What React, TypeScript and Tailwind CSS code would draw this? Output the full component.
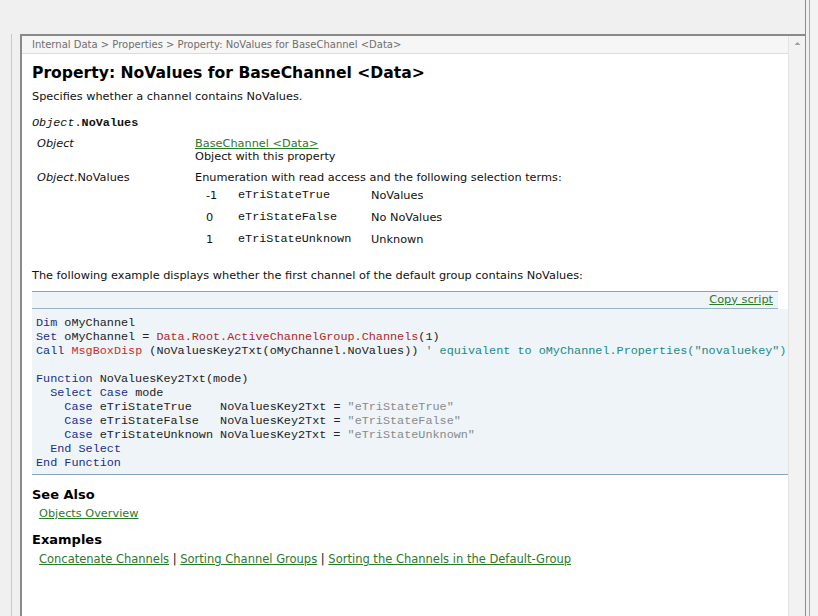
import React from 'react';

const sans = { fontFamily: '"DejaVu Sans", Verdana, sans-serif' };
const mono = { fontFamily: '"Liberation Mono", "Courier New", monospace' };

const ENUMS = [
  ['-1', 'eTriStateTrue', 'NoValues'],
  ['0', 'eTriStateFalse', 'No NoValues'],
  ['1', 'eTriStateUnknown', 'Unknown'],
];

function Kw({ children }: { children: React.ReactNode }) {
  return <span className="text-[#1c2f8a]">{children}</span>;
}
function Str({ children }: { children: React.ReactNode }) {
  return <span className="text-[#8a8a8a]">{children}</span>;
}

function CodeBlock() {
  return (
    <div className="mt-[7px]">
      <div className="flex h-[18px] items-center justify-end border-t border-b border-t-[#86a5b9] border-b-[#9bb3c3] border-b-dotted bg-[#eef4f8] pr-[5px]">
        <a className="text-[11.3px] text-[#2b7a2b] underline" style={sans}>Copy script</a>
      </div>
      <pre
        className="w-[770px] overflow-hidden whitespace-pre border-b border-[#86a5b9] bg-[#eef4f8] pt-[7px] pb-[4px] pl-[4px] text-[11.8px] leading-[14px] text-[#222]"
        style={mono}
      >
        <Kw>Dim</Kw> oMyChannel{'\n'}
        <Kw>Set</Kw> oMyChannel = <span className="text-[#b0282a]">Data.Root.ActiveChannelGroup.Channels</span>(1){'\n'}
        <Kw>Call</Kw> <span className="text-[#c8302e]">MsgBoxDisp</span> (NoValuesKey2Txt(oMyChannel.NoValues)){' '}
        <span className="text-[#1a8a8a]">' equivalent to oMyChannel.Properties("novaluekey").Value</span>{'\n'}
        {'\n'}
        <Kw>Function</Kw> NoValuesKey2Txt(mode){'\n'}
        {'  '}<Kw>Select Case</Kw> mode{'\n'}
        {'    '}<Kw>Case</Kw> eTriStateTrue{'    '}NoValuesKey2Txt = <Str>"eTriStateTrue"</Str>{'\n'}
        {'    '}<Kw>Case</Kw> eTriStateFalse{'   '}NoValuesKey2Txt = <Str>"eTriStateFalse"</Str>{'\n'}
        {'    '}<Kw>Case</Kw> eTriStateUnknown NoValuesKey2Txt = <Str>"eTriStateUnknown"</Str>{'\n'}
        {'  '}<Kw>End Select</Kw>{'\n'}
        <Kw>End Function</Kw>
      </pre>
    </div>
  );
}

export default function App() {
  return (
    <div className="flex h-[616px] w-[818px] overflow-hidden bg-[#f0f0f0]" style={sans}>
      {/* main window area */}
      <div className="flex w-[805px] flex-col">
        <div className="h-[34px] shrink-0" />
        <div className="flex flex-1">
          {/* left frame strip */}
          <div className="flex w-[20px] shrink-0">
            <div className="w-[12px] border-r border-[#c9c9c9]" />
          </div>

          {/* help panel */}
          <div className="flex flex-1 overflow-hidden border-t-2 border-l-2 border-[#8a8a8a]">
            <div className="flex-1 overflow-hidden bg-white text-[11.3px] text-[#111]">
              <div className="flex h-[18px] items-center border-b border-[#dcdcdc] bg-[#f6f6f6] px-[10px] text-[10px] text-[#6e6e6e]">
                Internal Data &gt; Properties &gt; Property: NoValues for BaseChannel &lt;Data&gt;
              </div>

              <div className="px-[10px]">
                <h1 className="mt-[8px] text-[15.6px] leading-[22px] font-bold text-black">
                  Property: NoValues for BaseChannel &lt;Data&gt;
                </h1>
                <p className="mt-[5px] leading-[16px]">Specifies whether a channel contains NoValues.</p>

                <div className="mt-[10px] text-[11.8px] leading-[16px]" style={mono}>
                  <i>Object</i>.<b>NoValues</b>
                </div>

                <div className="mt-[6px] flex leading-[13px]">
                  <div className="w-[163px] pl-[5px] italic">Object</div>
                  <div>
                    <a className="text-[#2b7a2b] underline">BaseChannel &lt;Data&gt;</a>
                    <div>Object with this property</div>
                  </div>
                </div>

                <div className="mt-[8px] flex leading-[13px]">
                  <div className="w-[163px] pl-[5px]">
                    <i>Object</i>.NoValues
                  </div>
                  <div>
                    <div>Enumeration with read access and the following selection terms:</div>
                    {ENUMS.map(([n, name, desc]) => (
                      <div key={name} className="flex h-[22px] items-center">
                        <div className="w-[43px] pl-[11px]">{n}</div>
                        <div className="w-[133px] text-[11.8px]" style={mono}>
                          {name}
                        </div>
                        <div>{desc}</div>
                      </div>
                    ))}
                  </div>
                </div>

                <p className="mt-[18px] leading-[16px]">
                  The following example displays whether the first channel of the default group contains NoValues:
                </p>

                <CodeBlock />

                <h2 className="mt-[11px] text-[13px] leading-[18px] font-bold text-black">See Also</h2>
                <div className="mt-[2px] pl-[7px] leading-[16px]">
                  <a className="text-[#2b7a2b] underline">Objects Overview</a>
                </div>

                <h2 className="mt-[9px] text-[13px] leading-[18px] font-bold text-black">Examples</h2>
                <div className="mt-[2px] pl-[7px] text-[11.5px] leading-[16px]">
                  <a className="text-[#2b7a2b] underline">Concatenate Channels</a>
                  {' | '}
                  <a className="text-[#2b7a2b] underline">Sorting Channel Groups</a>
                  {' | '}
                  <a className="text-[#2b7a2b] underline">Sorting the Channels in the Default-Group</a>
                </div>
              </div>
            </div>

            {/* scrollbar */}
            <div className="flex w-[17px] shrink-0 justify-center border-l border-[#e4e4e4] bg-[#f2f2f2] pt-[3px]">
              <svg width="9" height="9" viewBox="0 0 9 9">
                <path d="M1.5 6 L4.5 3 L7.5 6 Z" fill="#a0a0a0" />
              </svg>
            </div>
          </div>
        </div>
      </div>

      {/* right frame lines */}
      <div className="flex w-[13px] shrink-0">
        <div className="w-[4px] border-l border-[#8c8c8c]" />
        <div className="w-[9px] border-l border-[#a8a8a8] bg-[#f3f3f3]" />
      </div>
    </div>
  );
}
